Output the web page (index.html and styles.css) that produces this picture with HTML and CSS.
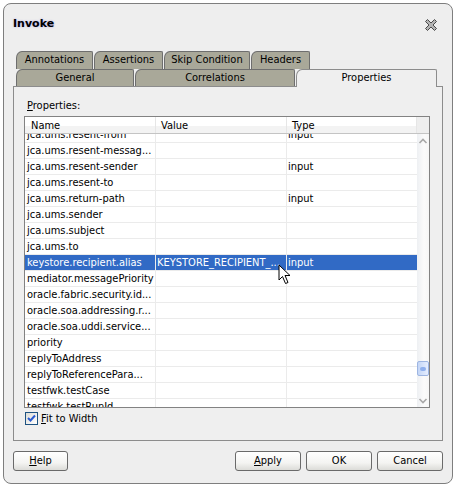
FILE: index.html
```html
<!DOCTYPE html>
<html>
<head>
<meta charset="utf-8">
<title>Invoke</title>
<link rel="stylesheet" href="styles.css">
</head>
<body>
<div class="win">
  <div class="titlebar">
    <span class="title">Invoke</span>
    <svg class="close" width="14" height="14" viewBox="0 0 14 14"><path d="M1.5 3.5 L3.5 1.5 L7 5 L10.5 1.5 L12.5 3.5 L9 7 L12.5 10.5 L10.5 12.5 L7 9 L3.5 12.5 L1.5 10.5 L5 7 Z" fill="#b4b4b4" stroke="#4a4a4a" stroke-width="1" stroke-linejoin="round"/></svg>
  </div>
  <div class="tabs">
    <div class="tabrow back">
      <div class="tab w-ann">Annotations</div>
      <div class="tab w-ass">Assertions</div>
      <div class="tab w-skip">Skip Condition</div>
      <div class="tab w-head">Headers</div>
    </div>
    <div class="tabrow front">
      <div class="tab w-gen">General</div>
      <div class="tab w-cor">Correlations</div>
      <div class="tab sel w-prop">Properties</div>
    </div>
  </div>
  <div class="panel">
    <div class="label"><u>P</u>roperties:</div>
    <div class="table">
      <div class="thead">
        <div class="th c1">Name</div>
        <div class="th c2">Value</div>
        <div class="th c3">Type</div>
        <div class="th corner"></div>
      </div>
      <div class="tbody">
        <div class="rows">
          <div class="row"><div class="td c1">jca.ums.resent-from</div><div class="td c2"></div><div class="td c3">input</div></div>
          <div class="row"><div class="td c1">jca.ums.resent-messag...</div><div class="td c2"></div><div class="td c3"></div></div>
          <div class="row"><div class="td c1">jca.ums.resent-sender</div><div class="td c2"></div><div class="td c3">input</div></div>
          <div class="row"><div class="td c1">jca.ums.resent-to</div><div class="td c2"></div><div class="td c3"></div></div>
          <div class="row"><div class="td c1">jca.ums.return-path</div><div class="td c2"></div><div class="td c3">input</div></div>
          <div class="row"><div class="td c1">jca.ums.sender</div><div class="td c2"></div><div class="td c3"></div></div>
          <div class="row"><div class="td c1">jca.ums.subject</div><div class="td c2"></div><div class="td c3"></div></div>
          <div class="row"><div class="td c1">jca.ums.to</div><div class="td c2"></div><div class="td c3"></div></div>
          <div class="row selected"><div class="td c1">keystore.recipient.alias</div><div class="td c2">KEYSTORE_RECIPIENT_...</div><div class="td c3">input</div></div>
          <div class="row"><div class="td c1">mediator.messagePriority</div><div class="td c2"></div><div class="td c3"></div></div>
          <div class="row"><div class="td c1">oracle.fabric.security.id...</div><div class="td c2"></div><div class="td c3"></div></div>
          <div class="row"><div class="td c1">oracle.soa.addressing.r...</div><div class="td c2"></div><div class="td c3"></div></div>
          <div class="row"><div class="td c1">oracle.soa.uddi.service...</div><div class="td c2"></div><div class="td c3"></div></div>
          <div class="row"><div class="td c1">priority</div><div class="td c2"></div><div class="td c3"></div></div>
          <div class="row"><div class="td c1">replyToAddress</div><div class="td c2"></div><div class="td c3"></div></div>
          <div class="row"><div class="td c1">replyToReferencePara...</div><div class="td c2"></div><div class="td c3"></div></div>
          <div class="row"><div class="td c1">testfwk.testCase</div><div class="td c2"></div><div class="td c3"></div></div>
          <div class="row"><div class="td c1">testfwk.testRunId</div><div class="td c2"></div><div class="td c3"></div></div>
        </div>
        <div class="vscroll">
          <svg class="arrow" width="12" height="13" viewBox="0 0 12 13"><polyline points="2.5,9 6,5.5 9.5,9" fill="none" stroke="#a8a8a8" stroke-width="1.6"/></svg>
          <div class="thumb"><span class="grip"></span></div>
          <div class="track-fill"></div>
          <svg class="arrow" width="12" height="12" viewBox="0 0 12 12"><polyline points="2.5,4 6,7.5 9.5,4" fill="none" stroke="#a8a8a8" stroke-width="1.6"/></svg>
        </div>
      </div>
    </div>
    <div class="fit">
      <span class="checkbox"><svg width="11" height="11" viewBox="0 0 11 11"><polyline points="2,5 4.5,7.5 9,2.5" fill="none" stroke="#2a5bd0" stroke-width="2"/></svg></span>
      <span class="fit-label"><u>F</u>it to Width</span>
    </div>
  </div>
  <div class="buttons">
    <button class="btn w-help"><u>H</u>elp</button>
    <span class="spacer"></span>
    <button class="btn w-std"><u>A</u>pply</button>
    <button class="btn w-std gap">OK</button>
    <button class="btn w-std gap">Cancel</button>
  </div>
</div>
<svg class="cursor" width="14" height="22" viewBox="0 0 14 22"><path d="M1 1 L1 16 L4.5 12.5 L7.5 19.5 L10 18.5 L7 11.5 L12 11.5 Z" fill="#fff" stroke="#000" stroke-width="1" stroke-linejoin="miter"/></svg>
</body>
</html>
```

FILE: styles.css
```css
html, body {
  margin: 0;
  padding: 0;
  background: #ffffff;
}
body {
  font-family: "DejaVu Sans Condensed", "DejaVu Sans", sans-serif;
  font-stretch: condensed;
  font-size: 11px;
  color: #000;
  position: relative;
  width: 456px;
  height: 487px;
  overflow: hidden;
}
.win {
  box-sizing: border-box;
  margin: 3px 0 0 3px;
  width: 450px;
  height: 481px;
  border: 1px solid #7e7e7e;
  border-radius: 8px;
  background: #eeeeee;
}
.titlebar {
  height: 47px;
  display: flex;
  justify-content: space-between;
  align-items: flex-start;
}
.title {
  font-family: "DejaVu Sans", sans-serif;
  font-stretch: normal;
  font-weight: bold;
  font-size: 11px;
  line-height: 14px;
  margin: 13px 0 0 9px;
  text-shadow: 0 0 2px rgba(110, 90, 230, 0.55);
}
.close {
  margin: 14px 14px 0 0;
}
.tabs {
  margin-left: 12px;
}
.tabrow {
  display: flex;
  align-items: flex-start;
}
.tabrow.back {
  height: 18px;
}
.tabrow.front {
  height: 17px;
}
.tab {
  box-sizing: border-box;
  height: 18px;
  border: 1px solid #6e6e6e;
  border-bottom: none;
  border-radius: 6px 2px 0 0 / 7px 2px 0 0;
  background: #a9a899;
  text-align: center;
  line-height: 16px;
  white-space: nowrap;
  overflow: hidden;
}
.front .tab {
  height: 17px;
}
.front .tab.sel {
  height: 18px;
  background: #efefef;
  border-color: #8c8c8c;
  position: relative;
  z-index: 1;
}
.w-ann { width: 77px; }
.w-ass { width: 69px; margin-left: 1px; }
.w-skip { width: 86px; margin-left: 1px; }
.w-head { width: 59px; margin-left: 1px; }
.w-gen { width: 118px; }
.w-cor { width: 160px; margin-left: 1px; }
.w-prop { width: 141px; margin-left: 1px; }

.panel {
  box-sizing: border-box;
  margin-left: 9px;
  width: 430px;
  height: 355px;
  border: 1px solid #8c8c8c;
  background: #efefef;
  padding: 0 0 0 10px;
}
.label {
  margin: 12px 0 0 3px;
  line-height: 14px;
}
.table {
  margin-top: 3px;
  box-sizing: border-box;
  width: 406px;
  height: 292px;
  border: 1px solid #828282;
  background: #fff;
  display: flex;
  flex-direction: column;
}
.thead {
  display: flex;
  height: 16px;
  border-bottom: 1px solid #c4c4c4;
  background: linear-gradient(#ffffff 0, #ffffff 55%, #f3f3f3 56%, #f3f3f3 100%);
  flex: none;
}
.th {
  box-sizing: border-box;
  line-height: 17px;
  padding-left: 6px;
  border-right: 1px solid #e6e6e6;
  white-space: nowrap;
  overflow: hidden;
}
.th.c2 { padding-left: 5px; }
.th.c3 { padding-left: 5px; }
.th.corner {
  width: 12px;
  padding: 0;
  border-right: none;
  background: #eeeeee;
}
.c1 { width: 131px; }
.c2 { width: 131px; }
.c3 { width: 130px; }
.tbody {
  display: flex;
  height: 273px;
  overflow: hidden;
}
.rows {
  width: 392px;
  margin-top: -7px;
}
.row {
  display: flex;
  height: 15px;
  border-bottom: 1px solid #ebebeb;
}
.td {
  box-sizing: border-box;
  line-height: 15px;
  padding-left: 2px;
  border-right: 1px solid #ebebeb;
  white-space: nowrap;
  overflow: hidden;
}
.td.c2 { padding-left: 1px; }
.td.c3 { padding-left: 1px; border-right: none; }
.row.selected {
  background: #316ac5;
  color: #fff;
}
.vscroll {
  width: 12px;
  box-sizing: border-box;
  background: linear-gradient(90deg, #eef0f3, #fbfbfb 60%, #f6f6f6);
  display: flex;
  flex-direction: column;
  align-items: center;
}
.arrow {
  display: block;
  flex: none;
}
.thumb {
  box-sizing: border-box;
  margin-top: 214px;
  width: 12px;
  height: 15px;
  border: 1px solid #9db5e2;
  border-radius: 2px;
  background: linear-gradient(90deg, #c4d6f6, #e6eeff);
  display: flex;
  align-items: center;
  justify-content: center;
  flex: none;
}
.grip {
  width: 6px;
  height: 4px;
  border-radius: 3px;
  background: #8fb0ee;
}
.track-fill {
  flex: 1;
}
.fit {
  display: flex;
  align-items: center;
  margin-top: 4px;
  height: 13px;
}
.checkbox {
  box-sizing: border-box;
  width: 13px;
  height: 13px;
  margin-left: 1px;
  border: 1px solid #1d5281;
  background: linear-gradient(135deg, #dcdcd7, #ffffff);
  display: flex;
  align-items: center;
  justify-content: center;
}
.checkbox svg { display: block; }
.fit-label {
  margin-left: 3px;
  line-height: 13px;
}
.buttons {
  display: flex;
  margin: 10px 0 0 9px;
  width: 430px;
}
.spacer { flex: 1; }
.btn {
  box-sizing: border-box;
  height: 20px;
  padding: 0;
  font-family: inherit;
  font-stretch: inherit;
  font-size: 11px;
  color: #000;
  border: 1px solid #6a6a6a;
  border-radius: 3px;
  background: linear-gradient(#ffffff, #f4f4f2 60%, #dcdcd8);
  text-align: center;
  line-height: 18px;
}
.w-help { width: 55px; }
.w-std { width: 66px; }
.gap { margin-left: 5px; }
.cursor {
  position: absolute;
  left: 278px;
  top: 264px;
}
```
